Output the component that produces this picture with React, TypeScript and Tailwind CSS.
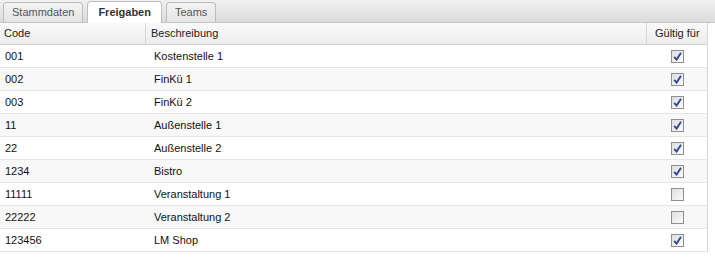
const rows = [
  { code: "001", name: "Kostenstelle 1", ok: true },
  { code: "002", name: "FinKü 1", ok: true },
  { code: "003", name: "FinKü 2", ok: true },
  { code: "11", name: "Außenstelle 1", ok: true },
  { code: "22", name: "Außenstelle 2", ok: true },
  { code: "1234", name: "Bistro", ok: true },
  { code: "11111", name: "Veranstaltung 1", ok: false },
  { code: "22222", name: "Veranstaltung 2", ok: false },
  { code: "123456", name: "LM Shop", ok: true },
];

function Check({ on }: { on: boolean }) {
  return (
    <div className="w-[13px] h-[13px] border border-[#8f8f8f] bg-gradient-to-br from-[#dedede] to-[#fbfbfb] flex items-center justify-center">
      {on && (
        <svg width="9" height="9" viewBox="0 0 9 9">
          <path d="M1.2 4.8 L3.6 7.6 L8 0.8" fill="none" stroke="#34479c" strokeWidth="1.9" />
        </svg>
      )}
    </div>
  );
}

export default function App() {
  return (
    <div className="w-[715px] h-[259px] bg-white text-[11px] text-[#111] font-['Liberation_Sans',Arial,sans-serif]">
      <div className="h-[23px] bg-gradient-to-b from-[#f0f0f0] to-[#dcdcdc] border-b border-[#c6c6c6] flex items-end gap-1 pl-[3px]">
        <div className="h-[20px] px-[8px] flex items-center rounded-t-[4px] border border-b-0 border-[#bdbdbd] bg-gradient-to-b from-[#f4f4f4] to-[#e3e3e3] text-[#555]">
          Stammdaten
        </div>
        <div className="h-[22px] px-[10px] mb-[-1px] flex items-center rounded-t-[4px] border border-b-0 border-[#bdbdbd] bg-white font-bold text-[#333]">
          Freigaben
        </div>
        <div className="h-[20px] px-[8px] flex items-center rounded-t-[4px] border border-b-0 border-[#bdbdbd] bg-gradient-to-b from-[#f4f4f4] to-[#e3e3e3] text-[#555]">
          Teams
        </div>
      </div>
      <div className="w-[708px] border-r border-[#d6d6d6]">
        <div className="h-[22px] flex bg-gradient-to-b from-[#fafafa] to-[#ececec] border-b border-[#d0d0d0] text-[#222]">
          <div className="w-[146px] pl-[4px] flex items-center border-r border-[#d6d6d6]">Code</div>
          <div className="w-[501px] pl-[5px] flex items-center border-r border-[#d6d6d6]">Beschreibung</div>
          <div className="flex-1 pl-[8px] flex items-center">Gültig für</div>
        </div>
        {rows.map((r, i) => (
          <div
            key={r.code}
            className={`h-[23px] flex items-center border-b border-[#e6e6e6] ${i % 2 ? "bg-[#f8f8f8]" : "bg-white"}`}
          >
            <div className="w-[146px] pl-[5px] pt-[1px]">{r.code}</div>
            <div className="w-[501px] pl-[8px] pt-[1px]">{r.name}</div>
            <div className="flex-1 flex justify-center">
              <Check on={r.ok} />
            </div>
          </div>
        ))}
      </div>
    </div>
  );
}
